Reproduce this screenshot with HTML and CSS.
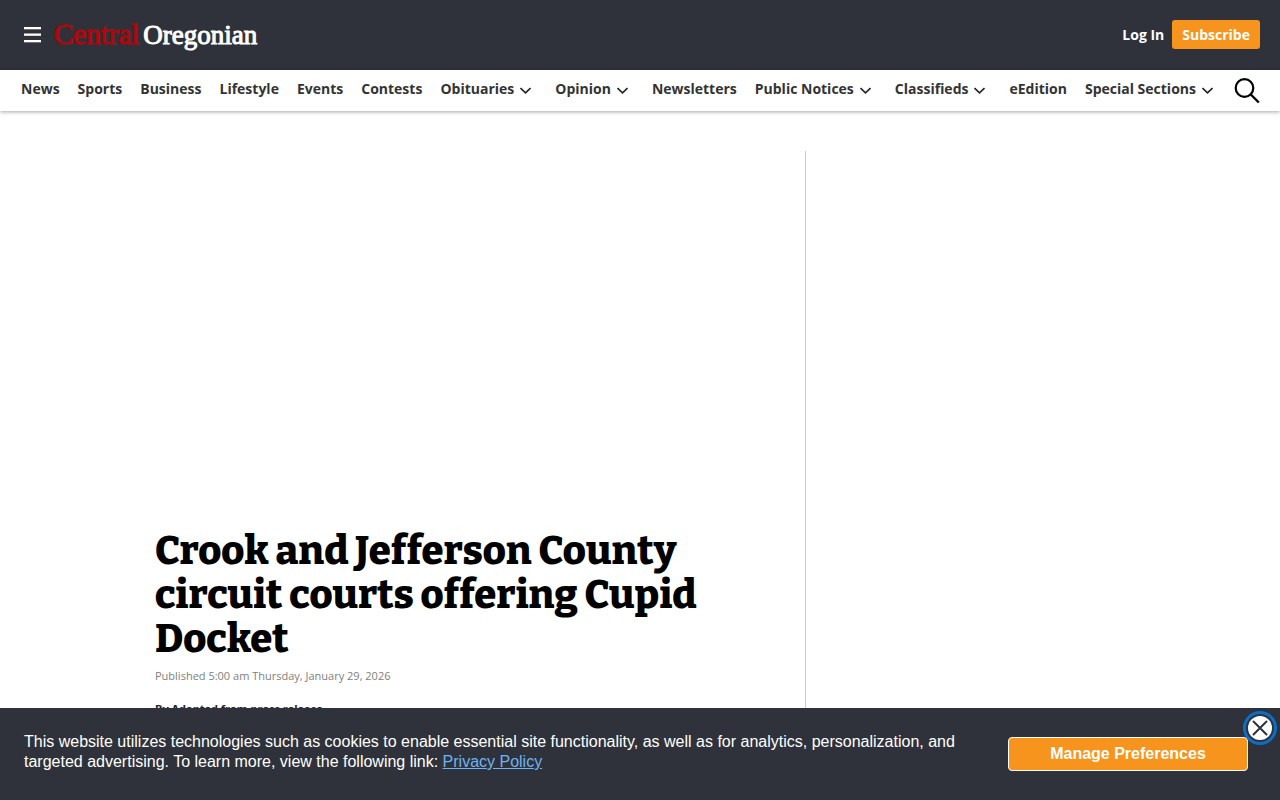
FILE: index.html
```html
<!DOCTYPE html>
<html lang="en">
  <head>
    <meta charset="UTF-8" />
    <meta name="viewport" content="width=device-width, initial-scale=1.0" />
    <title>Crook and Jefferson County circuit courts offering Cupid Docket - Central Oregonian</title>
    <link rel="stylesheet" href="styles.css">
  </head>
  <body>
    <header class="site-header">
      <button class="icon-btn menu-btn" aria-label="Menu">
        <svg width="17" height="18" viewBox="0 0 17 18" fill="#fff">
          <rect y="2" width="17" height="2.300" />
          <rect y="8.500" width="17" height="2.300" />
          <rect y="15" width="17" height="2.300" />
        </svg>
      </button>
      <a href="#" class="logo"><span class="logo-red">Central</span><span class="logo-white">Oregonian</span></a>
      <div class="account">
        <a href="#" class="login">Log In</a>
        <a href="#" class="subscribe">Subscribe</a>
      </div>
    </header>

    <nav class="main-nav">
      <ul class="nav-list">
        <li><a href="#">News</a></li>
        <li><a href="#">Sports</a></li>
        <li><a href="#">Business</a></li>
        <li><a href="#">Lifestyle</a></li>
        <li><a href="#">Events</a></li>
        <li><a href="#">Contests</a></li>
        <li><a href="#">Obituaries<svg class="chevron" viewBox="0 0 11 7"><path d="M.5 1l5 4.800L10.500 1" /></svg></a></li>
        <li><a href="#">Opinion<svg class="chevron" viewBox="0 0 11 7"><path d="M.5 1l5 4.800L10.500 1" /></svg></a></li>
        <li><a href="#">Newsletters</a></li>
        <li><a href="#">Public Notices<svg class="chevron" viewBox="0 0 11 7"><path d="M.5 1l5 4.800L10.500 1" /></svg></a></li>
        <li><a href="#">Classifieds<svg class="chevron" viewBox="0 0 11 7"><path d="M.5 1l5 4.800L10.500 1" /></svg></a></li>
        <li><a href="#">eEdition</a></li>
        <li><a href="#">Special Sections<svg class="chevron" viewBox="0 0 11 7"><path d="M.5 1l5 4.800L10.500 1" /></svg></a></li>
      </ul>
      <button class="icon-btn search-btn" aria-label="Search">
        <svg width="26" height="26" viewBox="0 0 26 26" fill="none" stroke="#000" stroke-width="2.200">
          <circle cx="10.500" cy="10" r="8.800" />
          <path d="M16.800 16.500l8 8" stroke-width="2.400" />
        </svg>
      </button>
    </nav>

    <main class="container">
      <article class="article">
        <div class="ad-slot"></div>
        <h1>Crook and Jefferson County circuit courts offering Cupid Docket</h1>
        <p class="published">Published 5:00 am Thursday, January 29, 2026</p>
        <p class="byline">By Adapted from press release</p>
      </article>
      <aside class="sidebar"></aside>
    </main>

    <div class="cookie-banner">
      <p class="cookie-text">
        This website utilizes technologies such as cookies to enable essential
        site functionality, as well as for analytics, personalization, and
        targeted advertising. To learn more, view the following link:
        <a href="#">Privacy Policy</a>
      </p>
      <button class="preferences-btn">Manage Preferences</button>
      <button class="close-btn" aria-label="Close">
        <svg width="16" height="16" viewBox="0 0 16 16" fill="none" stroke="#2f323a" stroke-width="2" stroke-linecap="round">
          <path d="M1.500 1.500l13 13M14.500 1.500l-13 13" />
        </svg>
      </button>
    </div>
  </body>
</html>
```
FILE: styles.css
```css
* {
  box-sizing: border-box;
}
body {
  display: flex;
  flex-direction: column;
  font-family: "Open Sans", "Noto Sans", sans-serif;
  background-color: #ffffff;
  color: #333333;
  margin: 0;
  min-height: 100vh;
}
a {
  color: inherit;
  text-decoration: none;
}
.icon-btn {
  display: flex;
  background: none;
  border: none;
  padding: 0;
  cursor: pointer;
}
.site-header {
  display: flex;
  align-items: center;
  height: 70px;
  padding: 0 20px 2px 24px;
  background-color: #2f323a;
}
.logo {
  display: flex;
  align-items: baseline;
  gap: 4px;
  margin-left: 13px;
  font-family: "Liberation Serif", serif;
  line-height: 30px;
}
.logo-red {
  color: #b3060b;
  font-size: 29px;
  -webkit-text-stroke: 1px #b3060b;
}
.logo-white {
  color: #ffffff;
  font-size: 27px;
  -webkit-text-stroke: 1px #ffffff;
}
.account {
  display: flex;
  align-items: center;
  gap: 8px;
  margin-left: auto;
  color: #ffffff;
  font-size: 14px;
  font-weight: 700;
  line-height: 21px;
}
.subscribe {
  padding: 4px 10px;
  border-radius: 3px;
  background-color: #f7941d;
}
.main-nav {
  display: flex;
  align-items: center;
  justify-content: space-between;
  height: 41px;
  padding: 0 20px 0 21px;
  box-shadow: 0 1px 4px rgba(0, 0, 0, 0.35);
}
.nav-list {
  display: flex;
  gap: 18px;
  margin: 0;
  padding: 0 0 3px;
  list-style: none;
  font-size: 14px;
  font-weight: 700;
  line-height: 20px;
  white-space: nowrap;
}
.chevron {
  width: 11px;
  height: 7px;
  margin: 0 6px;
  fill: none;
  stroke: #222222;
  stroke-width: 1.6;
}
.container {
  display: grid;
  flex: 1;
  grid-template-columns: 651px 1fr;
  width: 100%;
  max-width: 970px;
  margin: 40px auto 0;
}
.article {
  padding-right: 40px;
  border-right: 1px solid #cccccc;
}
.ad-slot {
  height: 378px;
}
h1 {
  margin: 0;
  color: #000000;
  font-family: Bitter, "DejaVu Serif Condensed", serif;
  font-size: 40px;
  font-variant-ligatures: none;
  font-weight: 800;
  line-height: 44px;
}
.published {
  margin: 7px 0 0;
  color: #808080;
  font-size: 11px;
  line-height: 16px;
}
.byline {
  margin: 17px 0 0;
  color: #222222;
  font-size: 11px;
  font-weight: 700;
  line-height: 16px;
}
.cookie-banner {
  position: fixed;
  right: 0;
  bottom: 0;
  left: 0;
  display: flex;
  align-items: center;
  justify-content: space-between;
  padding: 24px 32px 24px 24px;
  background-color: #2f323a;
  color: #ffffff;
  font-family: "Liberation Sans", Arial, sans-serif;
  font-size: 16px;
  line-height: 20px;
}
.cookie-text {
  flex: 1;
  max-width: 952px;
  margin: 0;
  padding-bottom: 4px;
}
.cookie-text a {
  color: #6cb4f5;
  text-decoration: underline;
}
.preferences-btn {
  width: 240px;
  height: 34px;
  border: 1px solid #ffffff;
  border-radius: 4px;
  background-color: #f7941d;
  color: #ffffff;
  font: bold 16px "Liberation Sans", Arial, sans-serif;
  cursor: pointer;
}
.close-btn {
  position: absolute;
  top: 8px;
  right: 8px;
  display: flex;
  align-items: center;
  justify-content: center;
  width: 24px;
  height: 24px;
  padding: 0;
  border: none;
  border-radius: 50%;
  background-color: #ffffff;
  box-shadow: 0 0 0 2px #2f323a, 0 0 0 5px #0a6fc9;
  cursor: pointer;
}
```
